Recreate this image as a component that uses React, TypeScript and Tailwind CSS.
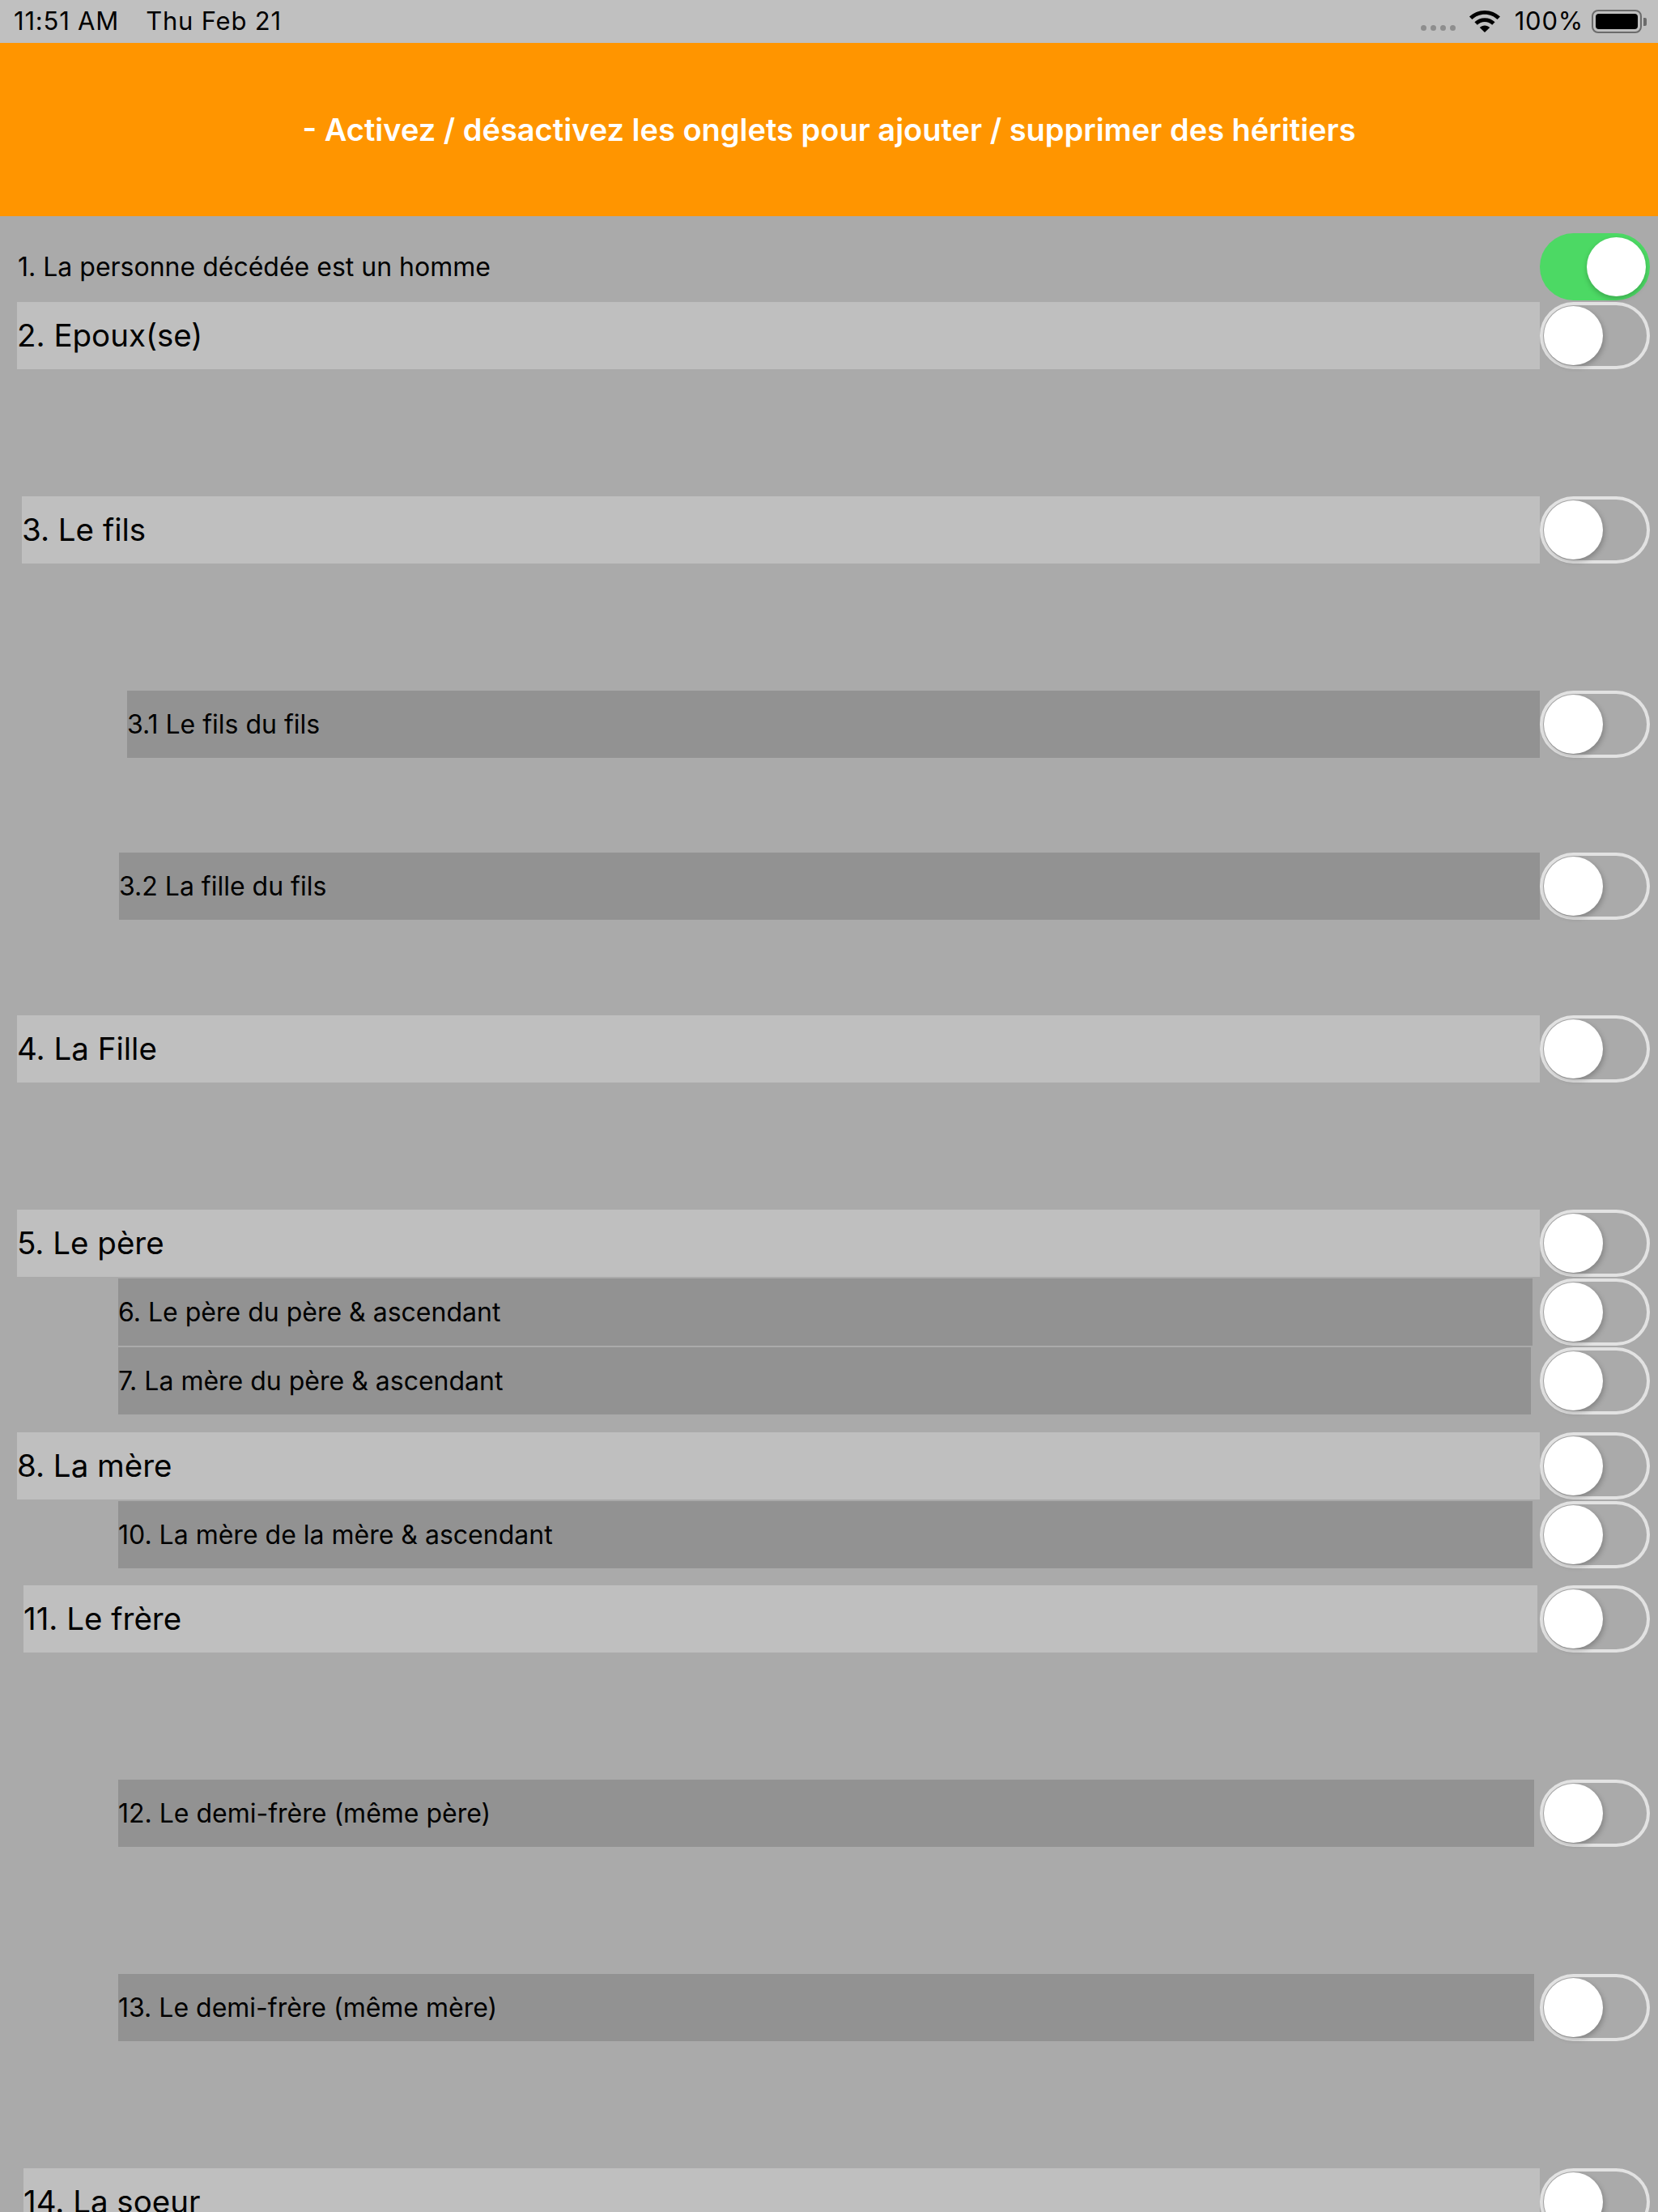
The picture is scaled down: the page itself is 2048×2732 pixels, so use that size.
type Heir = {
  label: string;
  kind: "plain" | "main" | "sub";
  row: string;
  gap?: string;
  on?: boolean;
};

const heirs: Heir[] = [
  { label: "1. La personne décédée est un homme", kind: "plain", row: "pl-[22px] mt-[21px]", on: true },
  { label: "2. Epoux(se)", kind: "main", row: "pl-[21px] mt-[2px]" },
  { label: "3. Le fils", kind: "main", row: "pl-[27px] mt-[157px]" },
  { label: "3.1 Le fils du fils", kind: "sub", row: "pl-[157px] mt-[157px]" },
  { label: "3.2 La fille du fils", kind: "sub", row: "pl-[147px] mt-[117px]" },
  { label: "4. La Fille", kind: "main", row: "pl-[21px] mt-[118px]" },
  { label: "5. Le père", kind: "main", row: "pl-[21px] mt-[157px]" },
  { label: "6. Le père du père & ascendant", kind: "sub", row: "pl-[146px] mt-[2px]", gap: "mr-[9px]" },
  { label: "7. La mère du père & ascendant", kind: "sub", row: "pl-[146px] mt-[2px]", gap: "mr-[11px]" },
  { label: "8. La mère", kind: "main", row: "pl-[21px] mt-[22px]" },
  { label: "10. La mère de la mère & ascendant", kind: "sub", row: "pl-[146px] mt-[2px]", gap: "mr-[9px]" },
  { label: "11. Le frère", kind: "main", row: "pl-[29px] mt-[21px]", gap: "mr-[3px]" },
  { label: "12. Le demi-frère (même père)", kind: "sub", row: "pl-[146px] mt-[157px]", gap: "mr-[7px]" },
  { label: "13. Le demi-frère (même mère)", kind: "sub", row: "pl-[146px] mt-[157px]", gap: "mr-[7px]" },
  { label: "14. La soeur", kind: "main", row: "pl-[29px] mt-[157px]" },
];

const labelStyles = {
  plain: "text-[32px]",
  main: "bg-[#bfbfbf] text-[38.5px]",
  sub: "bg-[#929292] text-[32px]",
};

function Toggle({ on }: { on?: boolean }) {
  return (
    <div
      className={
        on
          ? "relative w-[136px] h-[83px] shrink-0 rounded-full bg-[#4cd964]"
          : "relative w-[136px] h-[83px] shrink-0 rounded-full shadow-[inset_0_0_0_4px_#e2e2e2]"
      }
    >
      <div
        className={
          on
            ? "absolute top-[5px] left-[58px] w-[73px] h-[73px] rounded-full bg-white shadow-[0_3px_6px_rgba(0,0,0,0.22)]"
            : "absolute top-[5px] left-[5px] w-[73px] h-[73px] rounded-full bg-white shadow-[2px_3px_6px_rgba(0,0,0,0.22)]"
        }
      />
    </div>
  );
}

function WifiIcon() {
  return (
    <svg width="38" height="27" viewBox="0 0 38 27">
      <path d="M19 0C11.6 0 4.9 2.9 0 7.6l3.4 3.5C7.4 7.2 12.9 4.8 19 4.8s11.6 2.4 15.6 6.3L38 7.6C33.1 2.9 26.4 0 19 0z" fill="#000" />
      <path d="M19 9.2c-4.9 0-9.3 1.9-12.6 5.1l3.4 3.5c2.4-2.3 5.6-3.7 9.2-3.7s6.8 1.4 9.2 3.7l3.4-3.5C28.3 11.1 23.9 9.2 19 9.2z" fill="#000" />
      <path d="M19 18.4c-2.4 0-4.6 1-6.2 2.5L19 27l6.2-6.1c-1.6-1.5-3.8-2.5-6.2-2.5z" fill="#000" />
    </svg>
  );
}

function StatusBar() {
  return (
    <div className="h-[53px] bg-[#c0c0c0] flex items-center justify-between pl-[17px] pr-[14px] text-[31px] tracking-[0.8px] text-black">
      <div className="flex items-center gap-[33px]">
        <span>11:51 AM</span>
        <span>Thu Feb 21</span>
      </div>
      <div className="flex items-center">
        <div className="flex gap-[5px] mt-[16px]">
          <span className="w-[7px] h-[7px] rounded-full bg-[#8e8e8e]" />
          <span className="w-[7px] h-[7px] rounded-full bg-[#8e8e8e]" />
          <span className="w-[7px] h-[7px] rounded-full bg-[#8e8e8e]" />
          <span className="w-[7px] h-[7px] rounded-full bg-[#8e8e8e]" />
        </div>
        <div className="ml-[17px]">
          <WifiIcon />
        </div>
        <span className="ml-[18px]">100%</span>
        <div className="ml-[10px] flex items-center">
          <div className="w-[62px] h-[29px] rounded-[8px] border-[2px] border-[#6b6b6b] p-[3px]">
            <div className="w-full h-full rounded-[4px] bg-black" />
          </div>
          <div className="w-[4px] h-[10px] ml-[2px] rounded-r-[2px] bg-[#6b6b6b]" />
        </div>
      </div>
    </div>
  );
}

export default function App() {
  return (
    <main className="h-[2732px] overflow-hidden bg-[#aaaaaa] font-['Inter',sans-serif] text-black">
      <StatusBar />

      <header className="h-[214px] bg-[#ff9500] flex items-center justify-center">
        <p className="text-white font-semibold text-[38px]">
          - Activez / désactivez les onglets pour ajouter / supprimer des héritiers
        </p>
      </header>

      <section className="flex flex-col">
        {heirs.map((h) => (
          <div key={h.label} className={`flex items-center pr-[10px] ${h.row}`}>
            <div className={`flex-1 h-[83px] flex items-center ${labelStyles[h.kind]} ${h.gap ?? ""}`}>
              {h.label}
            </div>
            <Toggle on={h.on} />
          </div>
        ))}
      </section>
    </main>
  );
}
